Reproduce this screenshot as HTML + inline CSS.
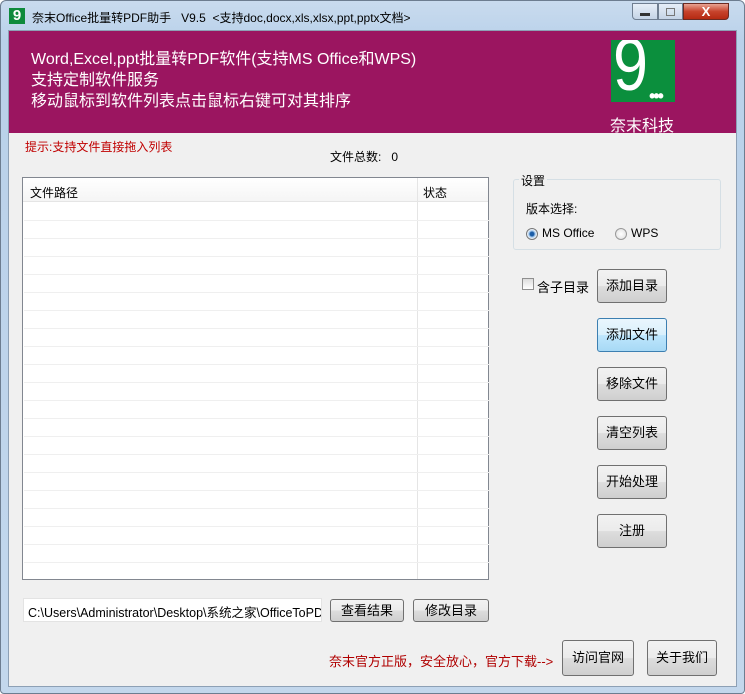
<!DOCTYPE html><html><head><meta charset="utf-8"><style>
*{margin:0;padding:0;box-sizing:border-box}
body{width:745px;height:694px;background:#fff;font-family:"Liberation Sans","Noto Sans CJK SC",sans-serif;font-size:12px;color:#000;position:relative;overflow:hidden}
.a{position:absolute}
.frame{left:0;top:0;width:745px;height:694px;background:linear-gradient(#c9dbee,#b9d1ea 40px,#c3d7ec);border:1px solid #6d7d90;border-radius:6px 6px 4px 4px}
.client{left:8px;top:30px;width:729px;height:657px;background:#f0f0f0;border:1px solid #8da0b5}
.btn{position:absolute;border:1px solid #707070;border-radius:3px;background:linear-gradient(#f2f2f2 0,#ebebeb 50%,#dddddd 51%,#cfcfcf);text-align:center;font-size:13px}
.row{position:absolute;left:1px;width:465px;height:1px;background:#efefef}
</style></head><body>
<div class="a frame"></div>
<div class="a" style="left:9px;top:8px;width:16px;height:16px;background:#0e8a3c;color:#fff;font-size:15px;line-height:16px;text-align:center;font-weight:bold">9</div>
<div class="a" style="left:32px;top:9px;font-size:12px">奈末Office批量转PDF助手&nbsp;&nbsp; V9.5&nbsp;&nbsp;&lt;支持doc,docx,xls,xlsx,ppt,pptx文档&gt;</div>
<div class="a" style="left:632px;top:3px;width:26px;height:17px;border:1px solid #6f7e91;border-radius:0 0 0 4px;background:linear-gradient(#e6eef8,#c5d4e6)"></div>
<div class="a" style="left:658px;top:3px;width:25px;height:17px;border:1px solid #6f7e91;background:linear-gradient(#e6eef8,#c5d4e6)"></div>
<div class="a" style="left:683px;top:3px;width:46px;height:17px;border:1px solid #6b2a22;border-radius:0 0 4px 0;background:linear-gradient(#e8a393,#c7432c 50%,#b52a12);color:#fff;font-weight:bold;text-align:center;line-height:15px;font-size:13px">X</div>
<div class="a" style="left:640px;top:13px;width:10px;height:3px;background:#333"></div>
<div class="a" style="left:666px;top:8px;width:9px;height:8px;border:1px solid #777"></div>
<div class="a client"></div>
<div class="a" style="left:9px;top:31px;width:727px;height:102px;background:#9b1560"></div>
<div class="a" style="left:31px;top:49px;color:#fff;font-size:16px;line-height:21px">Word,Excel,ppt批量转PDF软件(支持MS Office和WPS)<br>支持定制软件服务<br>移动鼠标到软件列表点击鼠标右键可对其排序</div>
<div class="a" style="left:611px;top:40px;width:64px;height:62px;background:#0b8f3d;overflow:hidden"><div style="position:absolute;left:2px;top:-12px;line-height:1;color:#fff;font-size:74px;font-family:'Liberation Sans',sans-serif;transform:scaleX(0.85);transform-origin:left">9</div><div style="position:absolute;left:38px;top:46px;color:#fff;font-size:18px;font-weight:bold;letter-spacing:-2px">•••</div></div>
<div class="a" style="left:610px;top:112px;color:#fff;font-size:16px">奈末科技</div>
<div class="a" style="left:25px;top:138px;color:#c00000;font-size:12px">提示:支持文件直接拖入列表</div>
<div class="a" style="left:330px;top:148px">文件总数:&nbsp;&nbsp; 0</div>
<div class="a" style="left:22px;top:177px;width:467px;height:403px;background:#fff;border:1px solid #828790">
<div class="a" style="left:0;top:0;width:465px;height:24px;border-bottom:1px solid #e5e5e5;background:linear-gradient(#fff,#f5f5f5)"></div>
<div class="a" style="left:7px;top:6px">文件路径</div><div class="a" style="left:400px;top:6px">状态</div>
<div class="a" style="left:394px;top:0;width:1px;height:401px;background:#e5e5e5"></div>
<div class="row" style="top:42px"></div><div class="row" style="top:60px"></div><div class="row" style="top:78px"></div><div class="row" style="top:96px"></div><div class="row" style="top:114px"></div><div class="row" style="top:132px"></div><div class="row" style="top:150px"></div><div class="row" style="top:168px"></div><div class="row" style="top:186px"></div><div class="row" style="top:204px"></div><div class="row" style="top:222px"></div><div class="row" style="top:240px"></div><div class="row" style="top:258px"></div><div class="row" style="top:276px"></div><div class="row" style="top:294px"></div><div class="row" style="top:312px"></div><div class="row" style="top:330px"></div><div class="row" style="top:348px"></div><div class="row" style="top:366px"></div><div class="row" style="top:384px"></div>
</div>
<div class="a" style="left:513px;top:179px;width:208px;height:71px;border:1px solid #d5dfe5;border-radius:3px"></div>
<div class="a" style="left:519px;top:172px;background:#f0f0f0;padding:0 2px">设置</div>
<div class="a" style="left:526px;top:200px">版本选择:</div>
<div class="a" style="left:526px;top:228px;width:12px;height:12px;border-radius:50%;border:1px solid #777;background:radial-gradient(#1c5ea8 2px,#9ec4ea 3px,#fff 5px)"></div>
<div class="a" style="left:542px;top:226px">MS Office</div>
<div class="a" style="left:615px;top:228px;width:12px;height:12px;border-radius:50%;border:1px solid #999;background:radial-gradient(#fff,#ddd)"></div>
<div class="a" style="left:631px;top:226px">WPS</div>
<div class="a" style="left:522px;top:278px;width:12px;height:12px;border:1px solid #8f8f8f;background:linear-gradient(#ddd,#fff)"></div>
<div class="a" style="left:537px;top:277px;font-size:13px">含子目录</div>
<div class="btn" style="left:597px;top:269px;width:70px;height:34px;line-height:32px">添加目录</div>
<div class="btn" style="left:597px;top:318px;width:70px;height:34px;line-height:32px;border-color:#3c7fb1;background:linear-gradient(#eaf6fd,#d9f0fc 50%,#bee6fd 51%,#a7d9f5)">添加文件</div>
<div class="btn" style="left:597px;top:367px;width:70px;height:34px;line-height:32px">移除文件</div>
<div class="btn" style="left:597px;top:416px;width:70px;height:34px;line-height:32px">清空列表</div>
<div class="btn" style="left:597px;top:465px;width:70px;height:34px;line-height:32px">开始处理</div>
<div class="btn" style="left:597px;top:514px;width:70px;height:34px;line-height:32px">注册</div>
<div class="a" style="left:23px;top:598px;width:299px;height:24px;background:#fff;border:1px solid #e3e3e3;padding:3px 4px;white-space:nowrap;overflow:hidden;font-size:12.5px">C:\Users\Administrator\Desktop\系统之家\OfficeToPD</div>
<div class="btn" style="left:330px;top:599px;width:74px;height:23px;line-height:21px">查看结果</div>
<div class="btn" style="left:413px;top:599px;width:76px;height:23px;line-height:21px">修改目录</div>
<div class="a" style="left:329px;top:651px;color:#b00000;font-size:13px">奈末官方正版，安全放心，官方下载--&gt;</div>
<div class="btn" style="left:562px;top:640px;width:72px;height:36px;line-height:34px">访问官网</div>
<div class="btn" style="left:647px;top:640px;width:70px;height:36px;line-height:34px">关于我们</div>
</body></html>
